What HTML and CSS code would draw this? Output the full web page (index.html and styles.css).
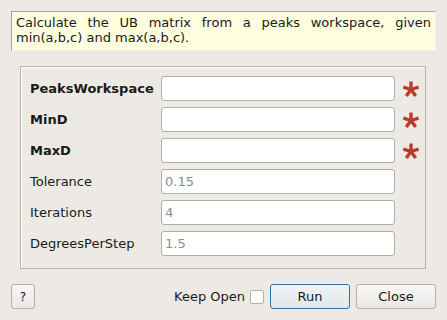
FILE: index.html
```html
<!DOCTYPE html>
<html lang="en">
<head>
    <meta charset="UTF-8">
    <title>FindUBUsingMinMaxD</title>
    <link rel="stylesheet" href="styles.css">
</head>
<body>
    <div class="dialog">
        <div class="description">Calculate the UB matrix from a peaks workspace, given min(a,b,c) and max(a,b,c).</div>

        <div class="group">
            <label class="prop-label required">PeaksWorkspace</label>
            <input class="prop-input" type="text">
            <span class="star"><svg width="16" height="16" viewBox="0 0 16 16"><g stroke="#bb3a28" stroke-width="3.4" stroke-linecap="butt"><line x1="8" y1="8.5" x2="8" y2="0.5"/><line x1="8" y1="8.5" x2="15.6" y2="6"/><line x1="8" y1="8.5" x2="0.4" y2="6"/><line x1="8" y1="8.5" x2="12.7" y2="15"/><line x1="8" y1="8.5" x2="3.3" y2="15"/></g></svg></span>

            <label class="prop-label required">MinD</label>
            <input class="prop-input" type="text">
            <span class="star"><svg width="16" height="16" viewBox="0 0 16 16"><g stroke="#bb3a28" stroke-width="3.4"><line x1="8" y1="8.5" x2="8" y2="0.5"/><line x1="8" y1="8.5" x2="15.6" y2="6"/><line x1="8" y1="8.5" x2="0.4" y2="6"/><line x1="8" y1="8.5" x2="12.7" y2="15"/><line x1="8" y1="8.5" x2="3.3" y2="15"/></g></svg></span>

            <label class="prop-label required">MaxD</label>
            <input class="prop-input" type="text">
            <span class="star"><svg width="16" height="16" viewBox="0 0 16 16"><g stroke="#bb3a28" stroke-width="3.4"><line x1="8" y1="8.5" x2="8" y2="0.5"/><line x1="8" y1="8.5" x2="15.6" y2="6"/><line x1="8" y1="8.5" x2="0.4" y2="6"/><line x1="8" y1="8.5" x2="12.7" y2="15"/><line x1="8" y1="8.5" x2="3.3" y2="15"/></g></svg></span>

            <label class="prop-label">Tolerance</label>
            <input class="prop-input" type="text" placeholder="0.15">
            <span></span>

            <label class="prop-label">Iterations</label>
            <input class="prop-input" type="text" placeholder="4">
            <span></span>

            <label class="prop-label">DegreesPerStep</label>
            <input class="prop-input" type="text" placeholder="1.5">
            <span></span>
        </div>

        <div class="button-bar">
            <button class="btn help-btn">?</button>
            <span class="spacer"></span>
            <label class="keep-open">Keep Open <span class="checkbox"></span></label>
            <button class="btn run-btn">Run</button>
            <button class="btn close-btn">Close</button>
        </div>
    </div>
</body>
</html>
```

FILE: styles.css
```css
* {
    margin: 0;
    padding: 0;
    box-sizing: border-box;
    font-family: 'DejaVu Sans', 'Liberation Sans', sans-serif;
}

body {
    background-color: #edeae5;
    color: #1a1a1a;
    font-size: 13px;
    width: 447px;
    height: 320px;
    overflow: hidden;
}

.dialog {
    padding: 11px 11px 0 11px;
}

.description {
    background-color: #ffffe0;
    border-top: 1px solid #a6a49a;
    border-left: 1px solid #a6a49a;
    border-right: 1px solid #f4f2ec;
    border-bottom: 1px solid #f4f2ec;
    height: 40px;
    padding: 3px 4px 0 4px;
    line-height: 15px;
    text-align: justify;
    color: #1a1a1a;
}

.group {
    margin: 15px 10px 0 9px;
    border: 1px solid #b7b3ad;
    box-shadow: inset 1px 1px 0 #ffffff;
    height: 203px;
    padding: 9px 0 0 9px;
    display: grid;
    grid-template-columns: 131px 234px 30px;
    grid-auto-rows: 25px;
    row-gap: 6px;
    align-items: center;
}

.prop-label {
    color: #1a1a1a;
}

.prop-label.required {
    font-weight: bold;
}

.prop-input {
    height: 25px;
    border: 1px solid #b2aea8;
    border-radius: 3px;
    background-color: #ffffff;
    padding: 0 3px;
    font-size: 13px;
    outline: none;
}

.prop-input::placeholder {
    color: #8e8e8e;
}

.star {
    display: flex;
    justify-content: center;
    padding-left: 1px;
}

.button-bar {
    display: flex;
    align-items: center;
    margin-top: 15px;
}

.spacer {
    flex-grow: 1;
}

.btn {
    height: 25px;
    border: 1px solid #b3afa9;
    border-radius: 3px;
    background: linear-gradient(#f8f7f6, #eae8e5);
    font-size: 13px;
    color: #1a1a1a;
}

.help-btn {
    width: 24px;
    font-size: 12px;
}

.keep-open {
    display: flex;
    align-items: center;
    gap: 5px;
    margin-right: 6px;
}

.checkbox {
    width: 14px;
    height: 14px;
    border: 1px solid #b3afa9;
    border-radius: 2px;
    background-color: #ffffff;
}

.run-btn {
    width: 80px;
    border-color: #2e73a4;
    background: linear-gradient(#f1f4f6, #e1e6ea);
    margin-right: 6px;
}

.close-btn {
    width: 80px;
}
```
